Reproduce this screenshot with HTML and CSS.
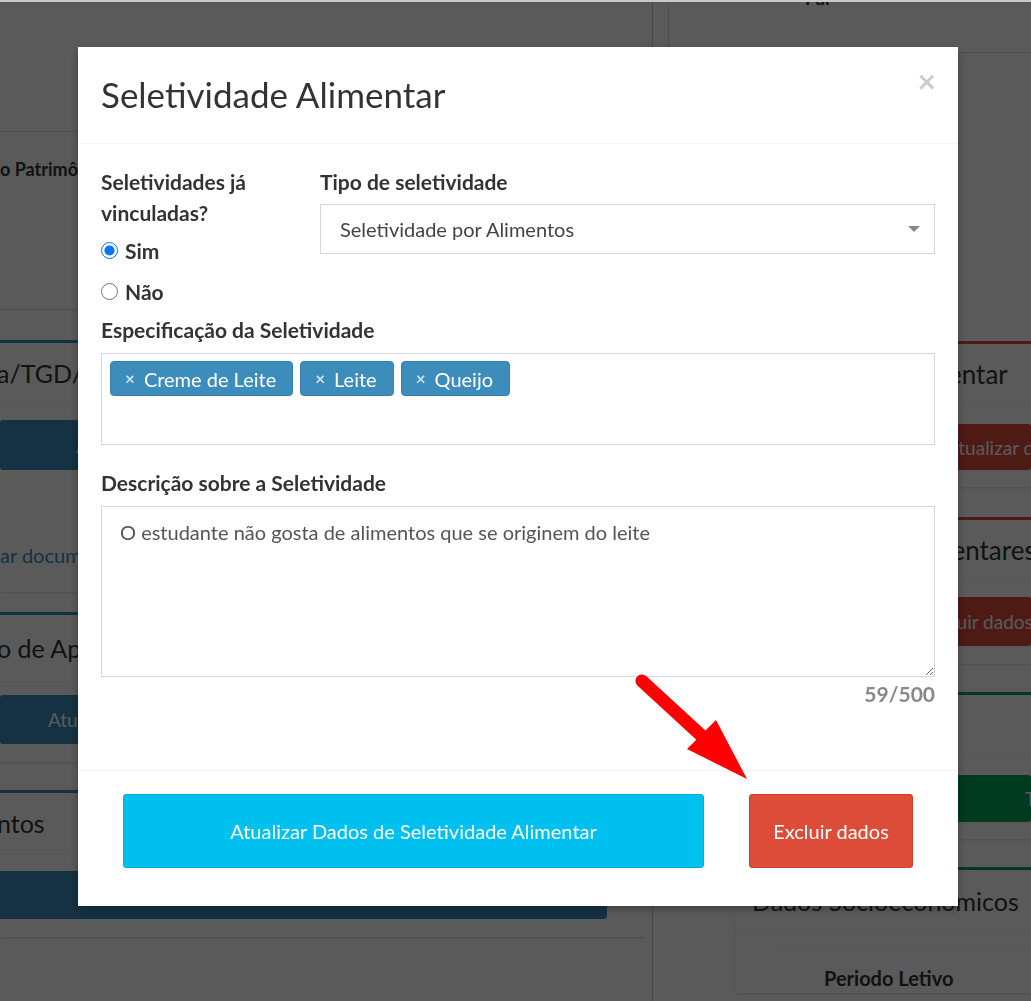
FILE: index.html
```html
<!DOCTYPE html>
<html lang="pt-BR">
<head>
  <meta charset="UTF-8">
  <title>Seletividade Alimentar</title>
  <link rel="stylesheet" href="styles.css">
</head>
<body>
  <div class="page">
    <div class="col-left">
      <div class="l-top"></div>
      <div class="l-row"><span class="row-title">o Patrimônio</span></div>

      <div class="box box-teal box-one">
        <div class="box-header">a/TGD/Autismo</div>
        <div class="box-body">
          <div class="bar bar-blue bar-one">Atualizar Dados</div>
          <div class="doc-link">ar documento</div>
        </div>
      </div>

      <div class="box box-teal box-two">
        <div class="box-header">o de Apoio</div>
        <div class="box-body">
          <div class="bar bar-blue bar-two">Atualizar Dados</div>
        </div>
      </div>

      <div class="box box-teal box-three">
        <div class="box-header">ntos</div>
        <div class="box-body">
          <div class="bar bar-blue bar-three"></div>
        </div>
      </div>
    </div>

    <div class="col-right">
      <div class="r-top">
        <div class="r-cell"></div>
        <span class="r-head">Pai</span>
      </div>

      <div class="box box-red r-one">
        <div class="box-header">Seletividade Alimentar</div>
        <div class="box-body">
          <div class="bar bar-red">Atualizar dados da seletividade</div>
        </div>
      </div>

      <div class="box box-red r-two">
        <div class="box-header">Restrições Alimentares</div>
        <div class="box-body">
          <div class="bar bar-red">Excluir dados de restrições</div>
        </div>
      </div>

      <div class="box box-green r-three">
        <div class="box-header"></div>
        <div class="box-body">
          <div class="bar bar-green">Todos</div>
        </div>
      </div>

      <div class="box box-green r-four">
        <div class="box-header">Dados Socioeconômicos</div>
        <div class="t-box">
          <span class="t-head">Periodo Letivo</span>
        </div>
      </div>
    </div>
  </div>

  <div class="backdrop"></div>
  <div class="top-strip"></div>

  <div class="modal">
    <div class="modal-header">
      <span class="close">&times;</span>
      <h4 class="modal-title">Seletividade Alimentar</h4>
    </div>

    <div class="modal-body">
      <div class="form-row">
        <div class="form-col">
          <label class="field-label">Seletividades já vinculadas?</label>
          <div class="radio-list">
            <label class="radio"><input type="radio" name="vinc" checked> Sim</label>
            <label class="radio"><input type="radio" name="vinc"> Não</label>
          </div>
        </div>
        <div class="form-col">
          <label class="field-label">Tipo de seletividade</label>
          <div class="select-box">
            <span>Seletividade por Alimentos</span>
            <span class="caret"></span>
          </div>
        </div>
      </div>

      <label class="field-label spec-label">Especificação da Seletividade</label>
      <div class="tags-box">
        <span class="tag"><span class="tag-x">&times;</span>Creme de Leite</span>
        <span class="tag"><span class="tag-x">&times;</span>Leite</span>
        <span class="tag"><span class="tag-x">&times;</span>Queijo</span>
      </div>

      <label class="field-label desc-label">Descrição sobre a Seletividade</label>
      <textarea class="desc">O estudante não gosta de alimentos que se originem do leite</textarea>
      <div class="counter">59/500</div>
    </div>

    <div class="modal-footer">
      <button class="btn btn-info">Atualizar Dados de Seletividade Alimentar</button>
      <button class="btn btn-danger">Excluir dados</button>
    </div>
  </div>

  <svg class="arrow" width="1031" height="1001" viewBox="0 0 1031 1001">
    <line x1="642" y1="681" x2="704" y2="738" stroke="#ff0000" stroke-width="13" stroke-linecap="round"/>
    <polygon points="687,749 716,720 747,779" fill="#ff0000"/>
  </svg>
</body>
</html>
```

FILE: styles.css
```css
html, body {
  margin: 0;
  padding: 0;
  height: 100%;
  overflow: hidden;
}

body {
  font-family: Lato, "Liberation Sans", sans-serif;
  background: #fff;
  color: #333;
}

/* page behind the modal */
.page {
  display: flex;
  height: 1001px;
  overflow: hidden;
}

.col-left {
  width: 645px;
  flex-shrink: 0;
  overflow: hidden;
}

.col-right {
  flex: 1;
  min-width: 0;
  margin-left: 7px;
  border-left: 1px solid #ccc;
  overflow: hidden;
}

.l-top {
  height: 131px;
  border-bottom: 1px solid #ddd;
}

.l-row {
  height: 178px;
  border-bottom: 1px solid #ddd;
  padding-top: 25px;
  box-sizing: border-box;
  white-space: nowrap;
}

.row-title {
  font-weight: bold;
  font-size: 18px;
  line-height: 24px;
}

.box {
  background: #fff;
  border-top: 3px solid #3c8dbc;
  box-shadow: 0 1px 2px rgba(0,0,0,0.15);
}

.box-teal { border-top-color: #3c8dbc; }
.box-red { border-top-color: #dd4b39; }
.box-green { border-top-color: #00a65a; }

.box-header {
  height: 60px;
  line-height: 60px;
  font-size: 25px;
  border-bottom: 1px solid #f4f4f4;
  white-space: nowrap;
  overflow: hidden;
}

.col-left .box-header {
  margin-left: -3px;
}

.bar {
  color: #fff;
  font-size: 19px;
  border-radius: 3px;
  display: flex;
  align-items: center;
  white-space: nowrap;
  overflow: hidden;
}

.bar-blue { background: #3c8dbc; }
.bar-red { background: #dd4b39; }
.bar-green { background: #00a65a; }

.box-one { margin-top: 30px; }
.box-one .box-body { padding: 16px 38px 24px 0; }
.bar-one { height: 50px; padding-left: 76px; }

.doc-link {
  margin-top: 72px;
  line-height: 26px;
  font-size: 20px;
  color: #3c8dbc;
  white-space: nowrap;
}

.box-two { margin-top: 20px; }
.box-two .box-header { height: 66px; line-height: 66px; }
.box-two .box-body { padding: 13px 38px 18px 0; }
.bar-two { height: 49px; padding-left: 48px; }

.box-three { margin-top: 28px; }
.box-three .box-body { padding: 17px 38px 18px 0; }
.bar-three { height: 48px; border-radius: 0 3px 3px 0; }

.r-top {
  height: 52px;
  border-bottom: 1px solid #ddd;
  display: flex;
}

.r-cell {
  width: 15px;
  border-right: 1px solid #ddd;
}

.r-head {
  font-weight: bold;
  font-size: 18px;
  line-height: 20px;
  margin-top: -12px;
  margin-left: 136px;
}

.col-right .box {
  margin-left: 82px;
}

.col-right .box-header {
  padding-left: 17px;
  font-size: 26px;
}

.col-right .box-body {
  padding: 19px 0 17px 0;
}

.r-one { margin-top: 288px; }
.r-one .bar { height: 46px; padding-left: 211px; }

.r-two { margin-top: 30px; }
.r-two .box-header { padding-left: 42px; }
.r-two .box-body { padding-top: 16px; padding-bottom: 18px; }
.r-two .bar { height: 49px; padding-left: 188px; }

.r-three { margin-top: 28px; }
.r-three .bar { height: 47px; padding-left: 290px; }

.r-four { margin-top: 28px; }
.r-four .box-header { height: 62px; line-height: 62px; font-size: 25px; }

.t-box {
  margin: 15px 0 0 38px;
  border-top: 1px solid #f4f4f4;
  padding: 16px 0 0 51px;
  line-height: 26px;
}

.t-head {
  font-weight: bold;
  font-size: 20px;
}

/* dim layer */
.backdrop {
  position: fixed;
  inset: 0;
  background: rgba(0, 0, 0, 0.647);
}

.top-strip {
  position: fixed;
  top: 0;
  left: 0;
  right: 0;
  height: 2px;
  background: #c8c8c8;
}

/* modal */
.modal {
  position: fixed;
  top: 47px;
  left: 78px;
  width: 880px;
  background: #fff;
  box-shadow: 0 3px 9px rgba(0,0,0,0.3);
}

.modal-header {
  padding: 27px 24px 29px 23px;
  border-bottom: 1px solid #f4f4f4;
}

.modal-title {
  margin: 0;
  font-size: 35px;
  font-weight: normal;
  line-height: 40px;
  color: #333;
}

.close {
  float: right;
  font-size: 32px;
  font-weight: bold;
  line-height: 1;
  color: #000;
  opacity: 0.2;
  margin-top: -9px;
  margin-right: -2px;
}

.modal-body {
  padding: 22px 23px 63px 23px;
}

.form-row {
  display: grid;
  grid-template-columns: 186px 1fr;
  column-gap: 33px;
}

.field-label {
  display: block;
  font-weight: bold;
  font-size: 21px;
  line-height: 31px;
  color: #333;
}

.form-col .field-label {
  margin-bottom: 7px;
}

.radio-list {
  display: flex;
  flex-direction: column;
  gap: 10px;
  margin-top: 2px;
}

.radio {
  display: flex;
  align-items: center;
  gap: 7px;
  height: 31px;
  font-weight: bold;
  font-size: 21px;
}

.radio input {
  width: 17px;
  height: 17px;
  margin: 0;
}

.select-box {
  height: 50px;
  box-sizing: border-box;
  border: 1px solid #d2d6de;
  padding: 0 14px 0 19px;
  display: flex;
  align-items: center;
  justify-content: space-between;
  font-size: 20px;
  color: #444;
}

.caret {
  width: 0;
  height: 0;
  border-left: 6px solid transparent;
  border-right: 6px solid transparent;
  border-top: 6px solid #888;
}

.spec-label {
  margin-top: 7px;
  margin-bottom: 8px;
}

.tags-box {
  height: 92px;
  box-sizing: border-box;
  border: 1px solid #d2d6de;
  padding: 7px 8px;
  display: flex;
  gap: 7px;
  align-items: flex-start;
}

.tag {
  height: 35px;
  box-sizing: border-box;
  background: #3c8dbc;
  border: 1px solid #367fa9;
  border-radius: 4px;
  color: #fff;
  font-size: 20px;
  padding: 0 16px 0 14px;
  display: flex;
  align-items: center;
}

.tag-x {
  font-weight: bold;
  font-size: 17px;
  color: rgba(255,255,255,0.75);
  margin-right: 9px;
}

.desc-label {
  margin-top: 22px;
  margin-bottom: 8px;
}

.desc {
  display: block;
  width: 100%;
  height: 171px;
  box-sizing: border-box;
  border: 1px solid #d2d6de;
  border-radius: 0;
  padding: 12px 18px;
  font-family: Lato, "Liberation Sans", sans-serif;
  font-size: 20px;
  line-height: 26px;
  color: #555;
  margin: 0;
}

.counter {
  text-align: right;
  font-weight: bold;
  font-size: 21px;
  line-height: 26px;
  color: #888;
  margin-top: 4px;
}

.modal-footer {
  border-top: 1px solid #f4f4f4;
  padding: 23px 45px 38px 45px;
  display: flex;
  justify-content: space-between;
}

.btn {
  height: 74px;
  border-radius: 3px;
  color: #fff;
  font-family: Lato, "Liberation Sans", sans-serif;
  font-size: 20px;
  cursor: pointer;
}

.btn-info {
  width: 581px;
  background: #00c0ef;
  border: 1px solid #00acd6;
}

.btn-danger {
  width: 164px;
  background: #dd4b39;
  border: 1px solid #d73925;
}

.arrow {
  position: fixed;
  top: 0;
  left: 0;
  pointer-events: none;
}
```
